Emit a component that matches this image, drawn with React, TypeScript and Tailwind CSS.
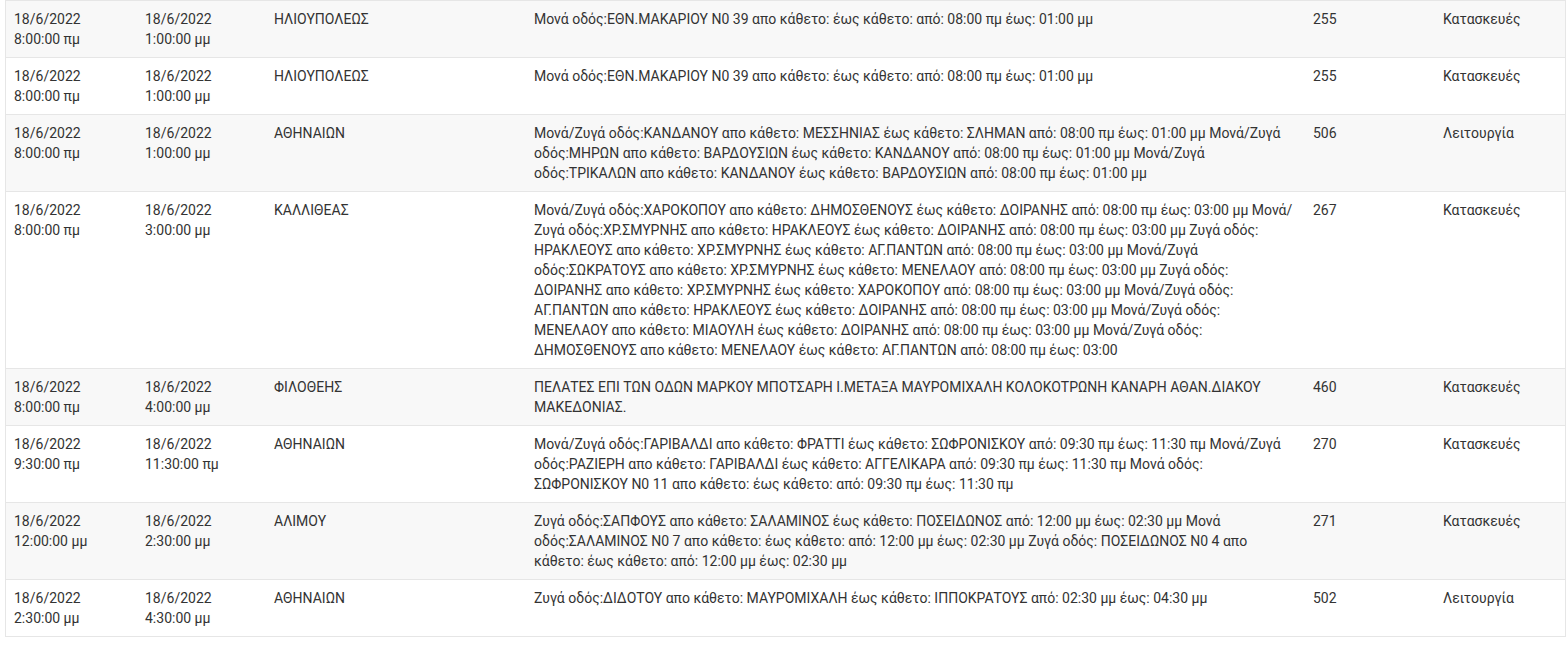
import React from "react";

type Row = {
  from: [string, string];
  to: [string, string];
  area: string;
  desc: string;
  num: string;
  type: string;
};

const rows: Row[] = [
  {
    from: ["18/6/2022", "8:00:00 πμ"],
    to: ["18/6/2022", "1:00:00 μμ"],
    area: "ΗΛΙΟΥΠΟΛΕΩΣ",
    desc: "Μονά οδός:ΕΘΝ.ΜΑΚΑΡΙΟΥ Ν0 39 απο κάθετο: έως κάθετο: από: 08:00 πμ έως: 01:00 μμ",
    num: "255",
    type: "Κατασκευές",
  },
  {
    from: ["18/6/2022", "8:00:00 πμ"],
    to: ["18/6/2022", "1:00:00 μμ"],
    area: "ΗΛΙΟΥΠΟΛΕΩΣ",
    desc: "Μονά οδός:ΕΘΝ.ΜΑΚΑΡΙΟΥ Ν0 39 απο κάθετο: έως κάθετο: από: 08:00 πμ έως: 01:00 μμ",
    num: "255",
    type: "Κατασκευές",
  },
  {
    from: ["18/6/2022", "8:00:00 πμ"],
    to: ["18/6/2022", "1:00:00 μμ"],
    area: "ΑΘΗΝΑΙΩΝ",
    desc: "Μονά/Ζυγά οδός:ΚΑΝΔΑΝΟΥ απο κάθετο: ΜΕΣΣΗΝΙΑΣ έως κάθετο: ΣΛΗΜΑΝ από: 08:00 πμ έως: 01:00 μμ Μονά/Ζυγά οδός:ΜΗΡΩΝ απο κάθετο: ΒΑΡΔΟΥΣΙΩΝ έως κάθετο: ΚΑΝΔΑΝΟΥ από: 08:00 πμ έως: 01:00 μμ Μονά/Ζυγά οδός:ΤΡΙΚΑΛΩΝ απο κάθετο: ΚΑΝΔΑΝΟΥ έως κάθετο: ΒΑΡΔΟΥΣΙΩΝ από: 08:00 πμ έως: 01:00 μμ",
    num: "506",
    type: "Λειτουργία",
  },
  {
    from: ["18/6/2022", "8:00:00 πμ"],
    to: ["18/6/2022", "3:00:00 μμ"],
    area: "ΚΑΛΛΙΘΕΑΣ",
    desc: "Μονά/Ζυγά οδός:ΧΑΡΟΚΟΠΟΥ απο κάθετο: ΔΗΜΟΣΘΕΝΟΥΣ έως κάθετο: ΔΟΙΡΑΝΗΣ από: 08:00 πμ έως: 03:00 μμ Μονά/Ζυγά οδός:ΧΡ.ΣΜΥΡΝΗΣ απο κάθετο: ΗΡΑΚΛΕΟΥΣ έως κάθετο: ΔΟΙΡΑΝΗΣ από: 08:00 πμ έως: 03:00 μμ Ζυγά οδός: ΗΡΑΚΛΕΟΥΣ απο κάθετο: ΧΡ.ΣΜΥΡΝΗΣ έως κάθετο: ΑΓ.ΠΑΝΤΩΝ από: 08:00 πμ έως: 03:00 μμ Μονά/Ζυγά οδός:ΣΩΚΡΑΤΟΥΣ απο κάθετο: ΧΡ.ΣΜΥΡΝΗΣ έως κάθετο: ΜΕΝΕΛΑΟΥ από: 08:00 πμ έως: 03:00 μμ Ζυγά οδός: ΔΟΙΡΑΝΗΣ απο κάθετο: ΧΡ.ΣΜΥΡΝΗΣ έως κάθετο: ΧΑΡΟΚΟΠΟΥ από: 08:00 πμ έως: 03:00 μμ Μονά/Ζυγά οδός: ΑΓ.ΠΑΝΤΩΝ απο κάθετο: ΗΡΑΚΛΕΟΥΣ έως κάθετο: ΔΟΙΡΑΝΗΣ από: 08:00 πμ έως: 03:00 μμ Μονά/Ζυγά οδός: ΜΕΝΕΛΑΟΥ απο κάθετο: ΜΙΑΟΥΛΗ έως κάθετο: ΔΟΙΡΑΝΗΣ από: 08:00 πμ έως: 03:00 μμ Μονά/Ζυγά οδός: ΔΗΜΟΣΘΕΝΟΥΣ απο κάθετο: ΜΕΝΕΛΑΟΥ έως κάθετο: ΑΓ.ΠΑΝΤΩΝ από: 08:00 πμ έως: 03:00",
    num: "267",
    type: "Κατασκευές",
  },
  {
    from: ["18/6/2022", "8:00:00 πμ"],
    to: ["18/6/2022", "4:00:00 μμ"],
    area: "ΦΙΛΟΘΕΗΣ",
    desc: "ΠΕΛΑΤΕΣ ΕΠΙ ΤΩΝ ΟΔΩΝ ΜΑΡΚΟΥ ΜΠΟΤΣΑΡΗ Ι.ΜΕΤΑΞΑ ΜΑΥΡΟΜΙΧΑΛΗ ΚΟΛΟΚΟΤΡΩΝΗ ΚΑΝΑΡΗ ΑΘΑΝ.ΔΙΑΚΟΥ ΜΑΚΕΔΟΝΙΑΣ.",
    num: "460",
    type: "Κατασκευές",
  },
  {
    from: ["18/6/2022", "9:30:00 πμ"],
    to: ["18/6/2022", "11:30:00 πμ"],
    area: "ΑΘΗΝΑΙΩΝ",
    desc: "Μονά/Ζυγά οδός:ΓΑΡΙΒΑΛΔΙ απο κάθετο: ΦΡΑΤΤΙ έως κάθετο: ΣΩΦΡΟΝΙΣΚΟΥ από: 09:30 πμ έως: 11:30 πμ Μονά/Ζυγά οδός:ΡΑΖΙΕΡΗ απο κάθετο: ΓΑΡΙΒΑΛΔΙ έως κάθετο: ΑΓΓΕΛΙΚΑΡΑ από: 09:30 πμ έως: 11:30 πμ Μονά οδός: ΣΩΦΡΟΝΙΣΚΟΥ Ν0 11 απο κάθετο: έως κάθετο: από: 09:30 πμ έως: 11:30 πμ",
    num: "270",
    type: "Κατασκευές",
  },
  {
    from: ["18/6/2022", "12:00:00 μμ"],
    to: ["18/6/2022", "2:30:00 μμ"],
    area: "ΑΛΙΜΟΥ",
    desc: "Ζυγά οδός:ΣΑΠΦΟΥΣ απο κάθετο: ΣΑΛΑΜΙΝΟΣ έως κάθετο: ΠΟΣΕΙΔΩΝΟΣ από: 12:00 μμ έως: 02:30 μμ Μονά οδός:ΣΑΛΑΜΙΝΟΣ Ν0 7 απο κάθετο: έως κάθετο: από: 12:00 μμ έως: 02:30 μμ Ζυγά οδός: ΠΟΣΕΙΔΩΝΟΣ Ν0 4 απο κάθετο: έως κάθετο: από: 12:00 μμ έως: 02:30 μμ",
    num: "271",
    type: "Κατασκευές",
  },
  {
    from: ["18/6/2022", "2:30:00 μμ"],
    to: ["18/6/2022", "4:30:00 μμ"],
    area: "ΑΘΗΝΑΙΩΝ",
    desc: "Ζυγά οδός:ΔΙΔΟΤΟΥ απο κάθετο: ΜΑΥΡΟΜΙΧΑΛΗ έως κάθετο: ΙΠΠΟΚΡΑΤΟΥΣ από: 02:30 μμ έως: 04:30 μμ",
    num: "502",
    type: "Λειτουργία",
  },
];

export default function App() {
  return (
    <div className="bg-white w-[1567px] h-[651px] overflow-hidden font-['Roboto','Noto_Sans',sans-serif] text-[14px] leading-[20px] text-[#333333]">
      <div className="ml-[5px] w-[1561px] border-l border-r border-b border-[#e6e6e6]">
        {rows.map((r, i) => (
          <div
            key={i}
            className={`flex border-t border-[#e6e6e6] ${i % 2 === 0 ? "bg-[#f8f8f8]" : "bg-white"}`}
          >
            <div className="w-[131px] shrink-0 px-2 py-2">
              <div>{r.from[0]}</div>
              <div>{r.from[1]}</div>
            </div>
            <div className="w-[129px] shrink-0 px-2 py-2">
              <div>{r.to[0]}</div>
              <div>{r.to[1]}</div>
            </div>
            <div className="w-[260px] shrink-0 px-2 py-2">{r.area}</div>
            <div className="w-[779px] shrink-0 px-2 py-2">{r.desc}</div>
            <div className="w-[130px] shrink-0 px-2 py-2">{r.num}</div>
            <div className="w-[130px] shrink-0 px-2 py-2">{r.type}</div>
          </div>
        ))}
      </div>
    </div>
  );
}
